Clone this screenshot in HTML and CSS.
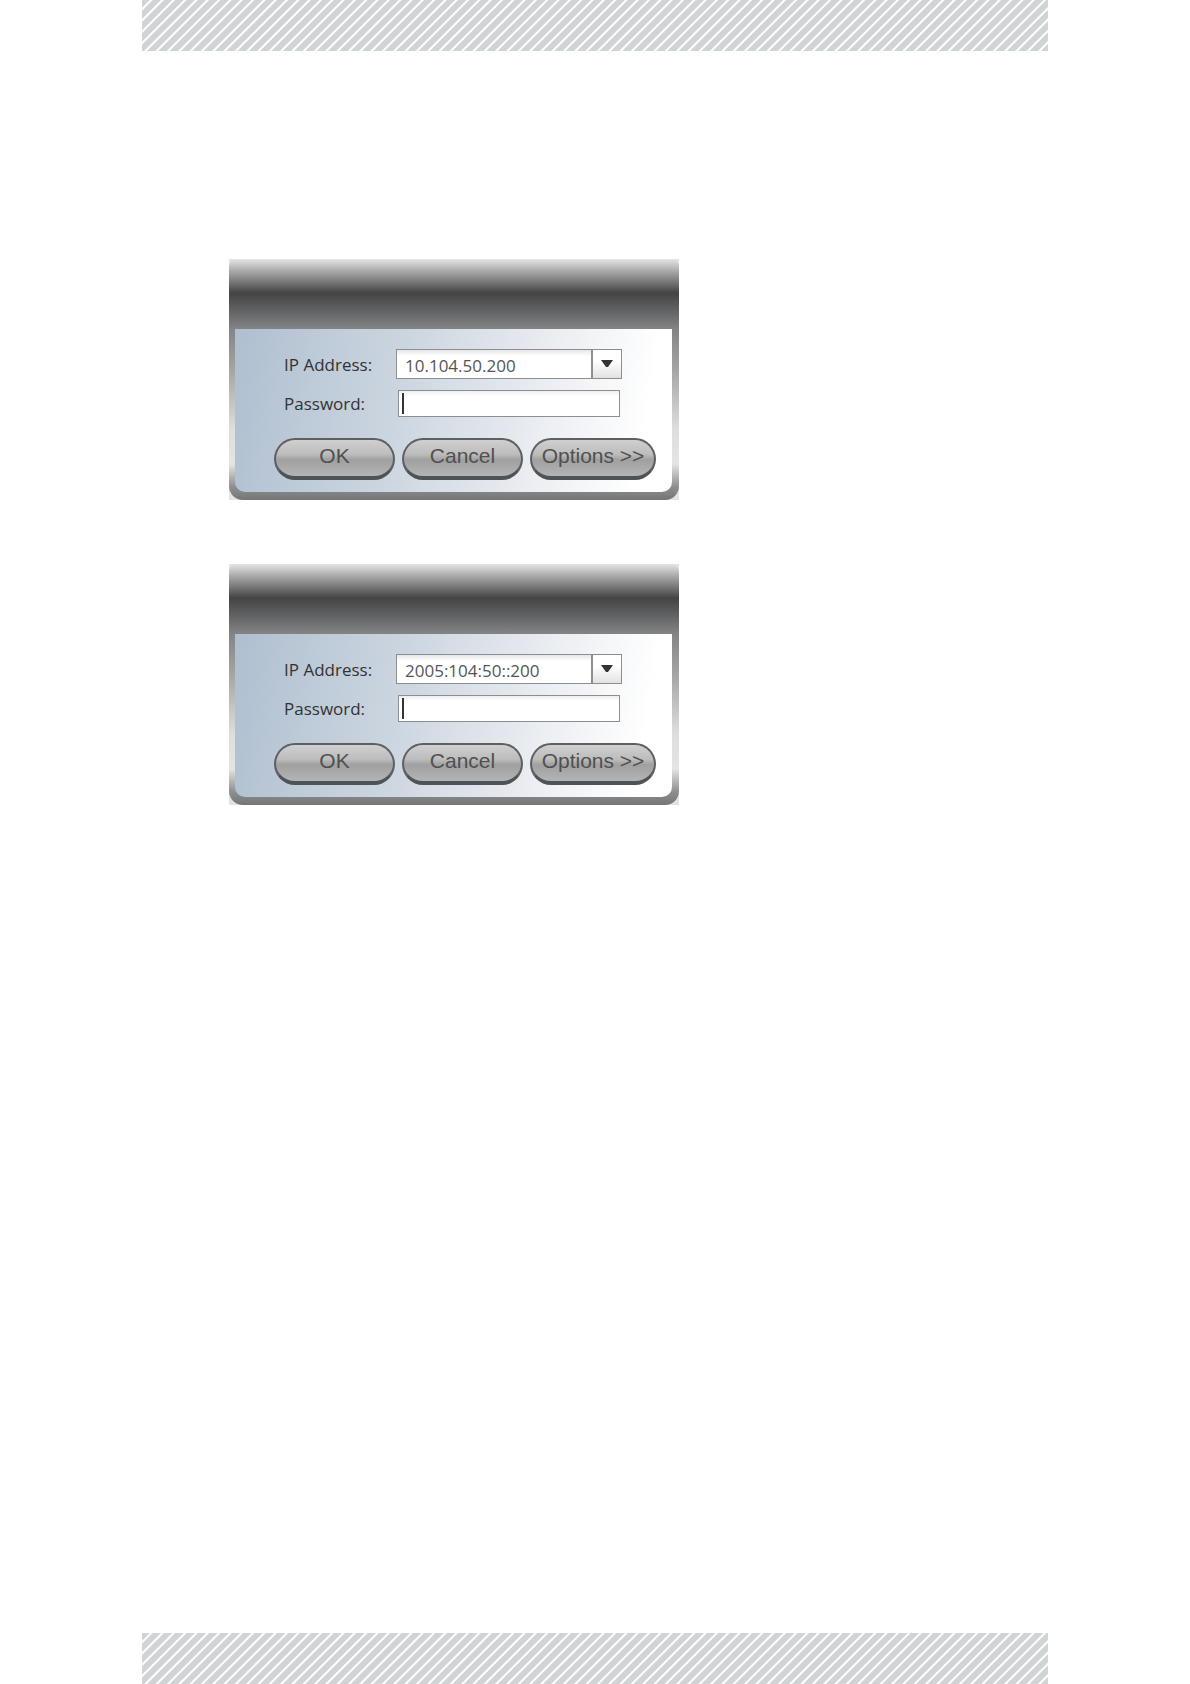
FILE: index.html
```
<!DOCTYPE html>
<html lang="en">
<head>
    <meta charset="UTF-8">
    <title>Login</title>
    <link rel="stylesheet" href="styles.css">
</head>
<body>
    <div class="stripes"></div>
    <main class="dialogs">
        <form class="dialog">
            <div class="frame">
                <div class="panel">
                    <div class="fields">
                        <label for="ip4">IP Address:</label>
                        <div class="combo">
                            <select id="ip4">
                                <option>10.104.50.200</option>
                            </select>
                            <span class="arrow"><svg width="12" height="8" viewBox="0 0 12 8"><path d="M0 0H12L7 7H5Z" fill="#333"/></svg></span>
                        </div>
                        <label for="pass4">Password:</label>
                        <input class="password" id="pass4" type="password">
                    </div>
                    <div class="buttons">
                        <button type="button">OK</button>
                        <button type="button">Cancel</button>
                        <button type="button" class="options">Options &gt;&gt;</button>
                    </div>
                </div>
            </div>
        </form>
        <form class="dialog">
            <div class="frame">
                <div class="panel">
                    <div class="fields">
                        <label for="ip6">IP Address:</label>
                        <div class="combo">
                            <select id="ip6">
                                <option>2005:104:50::200</option>
                            </select>
                            <span class="arrow"><svg width="12" height="8" viewBox="0 0 12 8"><path d="M0 0H12L7 7H5Z" fill="#333"/></svg></span>
                        </div>
                        <label for="pass6">Password:</label>
                        <input class="password" id="pass6" type="password">
                    </div>
                    <div class="buttons">
                        <button type="button">OK</button>
                        <button type="button">Cancel</button>
                        <button type="button" class="options">Options &gt;&gt;</button>
                    </div>
                </div>
            </div>
        </form>
    </main>
    <div class="stripes"></div>
</body>
</html>
```
FILE: styles.css
```
* {
    box-sizing: border-box;
}
body {
    margin: 0;
    min-height: 100vh;
    padding: 0 142px;
    display: flex;
    flex-direction: column;
    background: #fff;
    font-family: "Open Sans", "Noto Sans", sans-serif;
    font-size: 17px;
    color: #333;
}
.stripes {
    height: 51px;
    background: repeating-linear-gradient(135deg, #d0d4d5 0, #d0d4d5 5px, #fff 6px, #fff 7px, #d0d4d5 8px);
}
.dialogs {
    flex: 1;
    padding: 208px 0 0 87px;
    display: flex;
    flex-direction: column;
    align-items: flex-start;
    gap: 64px;
}
.dialog {
    background: #e2e4e4;
}
.frame {
    padding: 70px 7px 8px 6px;
    border-radius: 8px 8px 14px 14px;
    background: linear-gradient(#e4e4e4 0, #aaa 12px, #444 34px, #626364 52px, #828486 70px, #a4a4a4 110px, #dedede 170px, #e4e4e4 205px, #8c8e8f 228px, #737577 100%);
}
.panel {
    padding: 20px 16px 12px 39px;
    border-radius: 0 0 10px 10px;
    background: linear-gradient(100deg, #afbfd0 0, #ccd6e0 38%, #e4e8ee 62%, #fff 92%);
}
.fields {
    display: grid;
    grid-template-columns: 112px 226px;
    gap: 11px 0;
    align-items: center;
    padding-left: 10px;
}
.combo {
    position: relative;
}
.combo select {
    display: block;
    width: 100%;
    height: 30px;
    padding: 2px 40px 0 8px;
    border: 1px solid #8b8f93;
    border-radius: 0;
    background: linear-gradient(#e6e6e6, #fff 6px);
    font: inherit;
    color: #555;
    appearance: none;
}
.arrow {
    position: absolute;
    top: 1px;
    right: 1px;
    bottom: 1px;
    width: 30px;
    display: flex;
    align-items: center;
    justify-content: center;
    border-left: 2px solid #8b8f93;
    background: linear-gradient(#fff 40%, #e2e2e2);
    pointer-events: none;
}
.password {
    width: 222px;
    height: 27px;
    margin-left: 2px;
    padding: 0 6px;
    border: 1px solid #8b8f93;
    /* idle caret on the left */
    background: linear-gradient(#333, #333) 3px 2px / 2px 21px no-repeat, linear-gradient(#eee, #fff 5px);
    font: inherit;
}
.buttons {
    display: flex;
    gap: 7px;
    margin-top: 21px;
}
button {
    width: 121px;
    height: 42px;
    padding: 0 0 5px;
    border: 2px solid #5d6062;
    border-bottom: 4px solid #505355;
    border-radius: 21px;
    background: linear-gradient(#d0d0d0 0, #bcbcbc 40%, #a0a0a0 55%, #b4b4b4 100%);
    font-family: "Liberation Sans", Arial, sans-serif;
    font-size: 21px;
    line-height: 24px;
    color: #505050;
}
.options {
    width: 126px;
}
```
